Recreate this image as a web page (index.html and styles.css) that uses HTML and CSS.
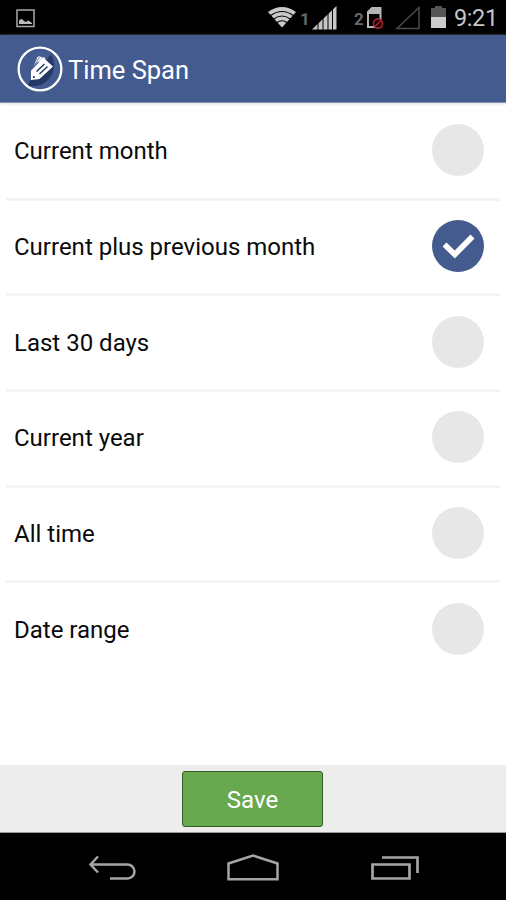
FILE: index.html
```html
<!DOCTYPE html>
<html lang="en">
<head>
<meta charset="utf-8">
<title>Time Span</title>
<link rel="stylesheet" href="styles.css">
</head>
<body>
<div class="screen">
  <div class="status">
    <svg class="picture" width="19" height="19" viewBox="0 0 19 19"><path d="M1 1h17v16.500H1z" fill="none" stroke="#a9a9a9" stroke-width="1.500"/><path d="M3 15v-3l1-1.500 2-.5 2 2 2 1 2-1.500 2 1 2 1.500v1z" fill="#bbb"/></svg>
    <div class="indicators">
      <svg width="29" height="22" viewBox="0 0 29 22"><path d="M14 21.500 0 6Q14-4 28 6z" fill="#c9c9c9"/><path d="M2 10Q14 1 26 10M5 13.500Q14 6.500 23 13.500M8.500 17Q14 12.500 19.500 17" fill="none" stroke="#000" stroke-width="1.100"/></svg>
      <span class="sim one">1</span>
      <svg class="signal" width="25" height="24" viewBox="0 0 25 24"><path d="M0 23.500 24.500 0v23.500z" fill="#c6c6c6"/><path d="M6 0v24M11 0v24M16 0v24M20.500 0v24" stroke="#000" stroke-width="1"/></svg>
      <span class="sim two">2</span>
      <svg class="card" width="18" height="24" viewBox="0 0 18 24"><path d="M2 21V6l4-4h8.500v19z" fill="none" stroke="#b5b5b5" stroke-width="2"/><path d="M2 8V5.500L5.500 2H15v6z" fill="#b5b5b5"/><circle cx="12" cy="17.500" r="4.600" fill="#180003" stroke="#a92435" stroke-width="1.600"/><path d="m9 20.500 6-6" stroke="#a92435" stroke-width="1.500"/></svg>
      <svg class="empty" width="26" height="24" viewBox="0 0 26 24"><path d="M2 22.500 24 1.500v21z" fill="none" stroke="#494949" stroke-width="1.500"/></svg>
      <svg class="battery" width="15" height="22" viewBox="0 0 15 22"><path d="M0 2h4V0h7v2h4v9H0z" fill="#555"/><path d="M0 11h15v11H0z" fill="#ccc"/></svg>
      <span class="clock">9:21</span>
    </div>
  </div>
  <header class="header">
    <svg class="logo" width="46" height="46" viewBox="0 0 46 46">
      <path d="M34 8.500A21 21 0 0 1 10.500 39.500L14 33z" fill="#243966"/>
      <path d="M34 10A21 21 0 0 1 10.500 39.500L24 24z" fill="#243966"/>
      <circle cx="23" cy="23" r="21.400" fill="none" stroke="#fff" stroke-width="2.300"/>
      <path d="M14 24.500 25.500 13q1.200-1 2.300 0l8.200 7.500-13.500 12.400-8.500 1.200z" fill="#fff"/>
      <path d="m16.500 20.500 4-9.500 2-1 2.600 1.600zM20.500 16.500l5.500-5.500 2.600 1.200-4.500 3.200z" fill="#fff"/>
      <path d="m17 20 6-9.500" stroke="#435b8f" stroke-width=".8"/>
      <path d="m19.500 25.500 8-7.500M22.500 28l8-7.500" stroke="#243966" stroke-width="1.500"/>
      <circle cx="16.900" cy="31" r="1.100" fill="#243966"/>
    </svg>
    <h1 class="title">Time Span</h1>
  </header>
  <main class="list">
    <div class="row"><span>Current month</span><i class="radio"></i></div>
    <div class="row"><span>Current plus previous month</span><i class="radio checked"><svg width="52" height="52" viewBox="0 0 52 52"><path d="m12.500 24.500 10.300 10 17.700-18" fill="none" stroke="#fff" stroke-width="5.600"/></svg></i></div>
    <div class="row"><span>Last 30 days</span><i class="radio"></i></div>
    <div class="row"><span>Current year</span><i class="radio"></i></div>
    <div class="row"><span>All time</span><i class="radio"></i></div>
    <div class="row"><span>Date range</span><i class="radio"></i></div>
  </main>
  <footer class="footer"><button class="save">Save</button></footer>
  <nav class="nav">
    <svg width="50" height="28" viewBox="0 0 50 28"><path d="M2 9.500h37.500a6.800 6.800 0 0 1 0 14H22M10 1.500l-7.500 8L10 17.500" fill="none" stroke="#a5a5a5" stroke-width="2.500"/></svg>
    <svg class="home" width="54" height="28" viewBox="0 0 54 28"><path d="M2.500 24.500V8.800L27 .8l24.500 8v15.700z" transform="translate(0 -.3)" fill="none" stroke="#a5a5a5" stroke-width="2.500"/></svg>
    <svg class="recent" width="50" height="28" viewBox="0 0 50 28"><path d="M2.500 9.500h37v14h-37zM12 2.500h35.500V18" fill="none" stroke="#a5a5a5" stroke-width="2.700"/></svg>
  </nav>
</div>
</body>
</html>
```
FILE: styles.css
```css
* { box-sizing: border-box; }
body { margin: 0; background: #fff; color: #0a0a0a; font-family: Roboto, sans-serif; }
svg { display: block; flex: none; overflow: visible; }
.screen { width: 506px; height: 900px; display: flex; flex-direction: column; overflow: hidden; }
.status { height: 35px; flex: none; background: #000; display: flex; justify-content: space-between; align-items: flex-start; }
.picture { margin: 9px 0 0 16px; }
.indicators { height: 35px; display: flex; align-items: flex-start; padding: 6px 10px 0 0; }
.sim { font: bold 17px/20px Roboto, sans-serif; color: #666; width: 10px; margin-top: 3px; }
.one { margin-left: 3px; }
.signal { margin-left: 2px; }
.two { margin-left: 17px; }
.card { margin-left: 2px; }
.empty { margin-left: 11px; }
.battery { margin-left: 10px; }
.clock { width: 42px; margin: -1px 0 0 8px; color: #c6c6c6; font-size: 23.500px; letter-spacing: -.4px; line-height: 26px; white-space: nowrap; }
.header { height: 68px; flex: none; display: flex; align-items: center; padding-left: 17px; background: #435b8f; border-bottom: 1px solid #8492ae; box-shadow: 0 1px 3px #ddd; }
.title { margin: 2px 0 0 5px; color: #fff; font-size: 25.500px; font-weight: 400; line-height: 32px; }
.list { flex: 1; padding: 2px 6px 0; }
.row { height: 95.660px; display: flex; align-items: center; justify-content: space-between; padding: 0 16px 0 8px; border-bottom: 3px solid #f4f4f4; font-size: 24px; white-space: nowrap; }
.row:last-child { border-bottom-color: transparent; }
.radio { width: 52px; height: 52px; margin-top: -2px; border-radius: 50%; background: #e7e7e7; }
.checked { background: #435b8f; }
.footer { height: 68px; flex: none; display: flex; justify-content: center; align-items: flex-start; padding: 6px 1px 0 0; background: #ededed; border-bottom: 1px solid #999; }
.save { width: 141px; height: 56px; padding: 2px 0 0; border: 1px solid #315f23; border-radius: 3px; background: #68a84f; color: #fff; font: 24px Roboto, sans-serif; }
.nav { height: 67px; flex: none; display: flex; align-items: flex-start; background: #000; padding: 22px 0 0 88px; }
.home { margin-left: 88px; }
.recent { margin-left: 90px; }
```
